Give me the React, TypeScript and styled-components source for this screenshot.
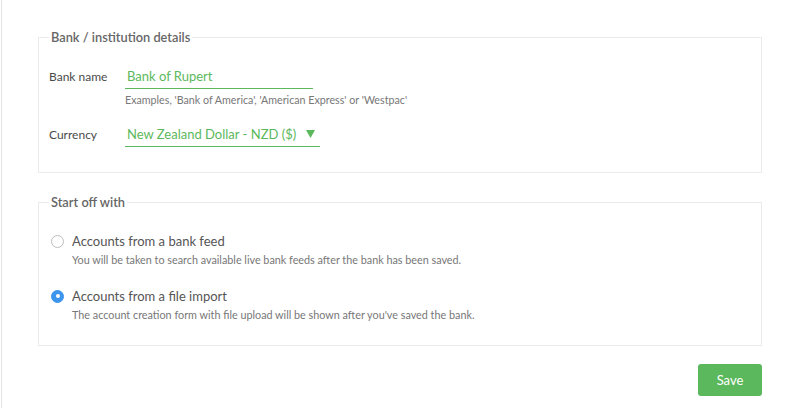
import styled, { createGlobalStyle } from 'styled-components';

const GlobalStyle = createGlobalStyle`
  html, body {
    margin: 0;
    padding: 0;
    background: #fff;
  }
  body {
    font-family: Lato, 'Open Sans', sans-serif;
    color: #555;
  }
`;

const green = '#5cb85c';

const Page = styled.div`
  min-height: 408px;
  box-sizing: border-box;
  margin-left: 1px;
  border-left: 1px solid #e4e4e4;
  padding: 29px 25px 0 36px;
  display: flex;
  flex-direction: column;
  gap: 21px;
`;

const Fieldset = styled.fieldset<{ $top: number; $bottom: number }>`
  margin: 0;
  border: 1px solid #ebebeb;
  padding: ${p => p.$top}px 10px ${p => p.$bottom}px 10px;
  min-width: 0;
`;

const Legend = styled.legend`
  padding: 0 2px;
  margin-left: 0;
  font-size: 12.8px;
  line-height: 16px;
  font-weight: 600;
  color: #666;
`;

const FieldRow = styled.div<{ $gap?: number }>`
  display: grid;
  grid-template-columns: 76px auto;
  align-items: start;
  margin-top: ${p => p.$gap ?? 0}px;
`;

const Label = styled.label`
  font-size: 12px;
  line-height: 25px;
  color: #4a4a4a;
`;

const FieldCol = styled.div`
  display: flex;
  flex-direction: column;
  align-items: flex-start;
`;

const TextInput = styled.input`
  box-sizing: border-box;
  width: 188px;
  height: 25px;
  border: none;
  border-bottom: 1px solid ${green};
  outline: none;
  padding: 0 2px;
  font-family: inherit;
  font-size: 13px;
  color: ${green};
  background: transparent;
`;

const Hint = styled.div`
  margin-top: 4px;
  font-size: 10.7px;
  line-height: 14px;
  color: #777;
`;

const Select = styled.div`
  box-sizing: border-box;
  width: 195px;
  height: 25px;
  border-bottom: 1px solid ${green};
  padding: 0 2px;
  display: flex;
  align-items: center;
  justify-content: space-between;
  font-size: 13px;
  color: ${green};
`;

const Caret = styled.svg`
  width: 9px;
  height: 8px;
  margin-right: 3px;
`;

const Options = styled.div`
  display: flex;
  flex-direction: column;
  gap: 20px;
`;

const Option = styled.div`
  display: grid;
  grid-template-columns: 21px auto;
  padding-left: 2px;
`;

const Radio = styled.span<{ $checked?: boolean }>`
  box-sizing: border-box;
  width: 13px;
  height: 13px;
  border-radius: 50%;
  align-self: center;
  border: 1px solid ${p => (p.$checked ? '#3d95ee' : '#bdbdbd')};
  background: ${p => (p.$checked ? '#3d95ee' : '#fff')};
  display: flex;
  align-items: center;
  justify-content: center;
  &::after {
    content: '';
    width: 4px;
    height: 4px;
    border-radius: 50%;
    background: #fff;
    display: ${p => (p.$checked ? 'block' : 'none')};
  }
`;

const OptionTitle = styled.div`
  font-size: 13px;
  line-height: 18px;
  color: #555;
`;

const OptionDesc = styled.div`
  grid-column: 2;
  margin-top: 3px;
  font-size: 10.8px;
  line-height: 14px;
  color: #777;
`;

const Actions = styled.div`
  display: flex;
  justify-content: flex-end;
  margin-top: -3px;
`;

const SaveButton = styled.button`
  width: 64px;
  height: 32px;
  border: none;
  border-radius: 3px;
  background: ${green};
  color: #fff;
  font-family: inherit;
  font-size: 13px;
  cursor: pointer;
`;

export default function App() {
  return (
    <>
      <GlobalStyle />
      <Page>
        <Fieldset $top={19} $bottom={25}>
          <Legend>Bank / institution details</Legend>
          <FieldRow>
            <Label>Bank name</Label>
            <FieldCol>
              <TextInput defaultValue='Bank of Rupert' />
              <Hint>Examples, 'Bank of America', 'American Express' or 'Westpac'</Hint>
            </FieldCol>
          </FieldRow>
          <FieldRow $gap={15}>
            <Label>Currency</Label>
            <FieldCol>
              <Select>
                New Zealand Dollar - NZD ($)
                <Caret viewBox='0 0 9 8'>
                  <polygon points='0,0 9,0 4.5,8' fill={green} />
                </Caret>
              </Select>
            </FieldCol>
          </FieldRow>
        </Fieldset>
        <Fieldset $top={22} $bottom={23}>
          <Legend>Start off with</Legend>
          <Options>
            <Option>
              <Radio />
              <OptionTitle>Accounts from a bank feed</OptionTitle>
              <OptionDesc>
                You will be taken to search available live bank feeds after the bank has been saved.
              </OptionDesc>
            </Option>
            <Option>
              <Radio $checked />
              <OptionTitle>Accounts from a file import</OptionTitle>
              <OptionDesc>
                The account creation form with file upload will be shown after you've saved the bank.
              </OptionDesc>
            </Option>
          </Options>
        </Fieldset>
        <Actions>
          <SaveButton>Save</SaveButton>
        </Actions>
      </Page>
    </>
  );
}
